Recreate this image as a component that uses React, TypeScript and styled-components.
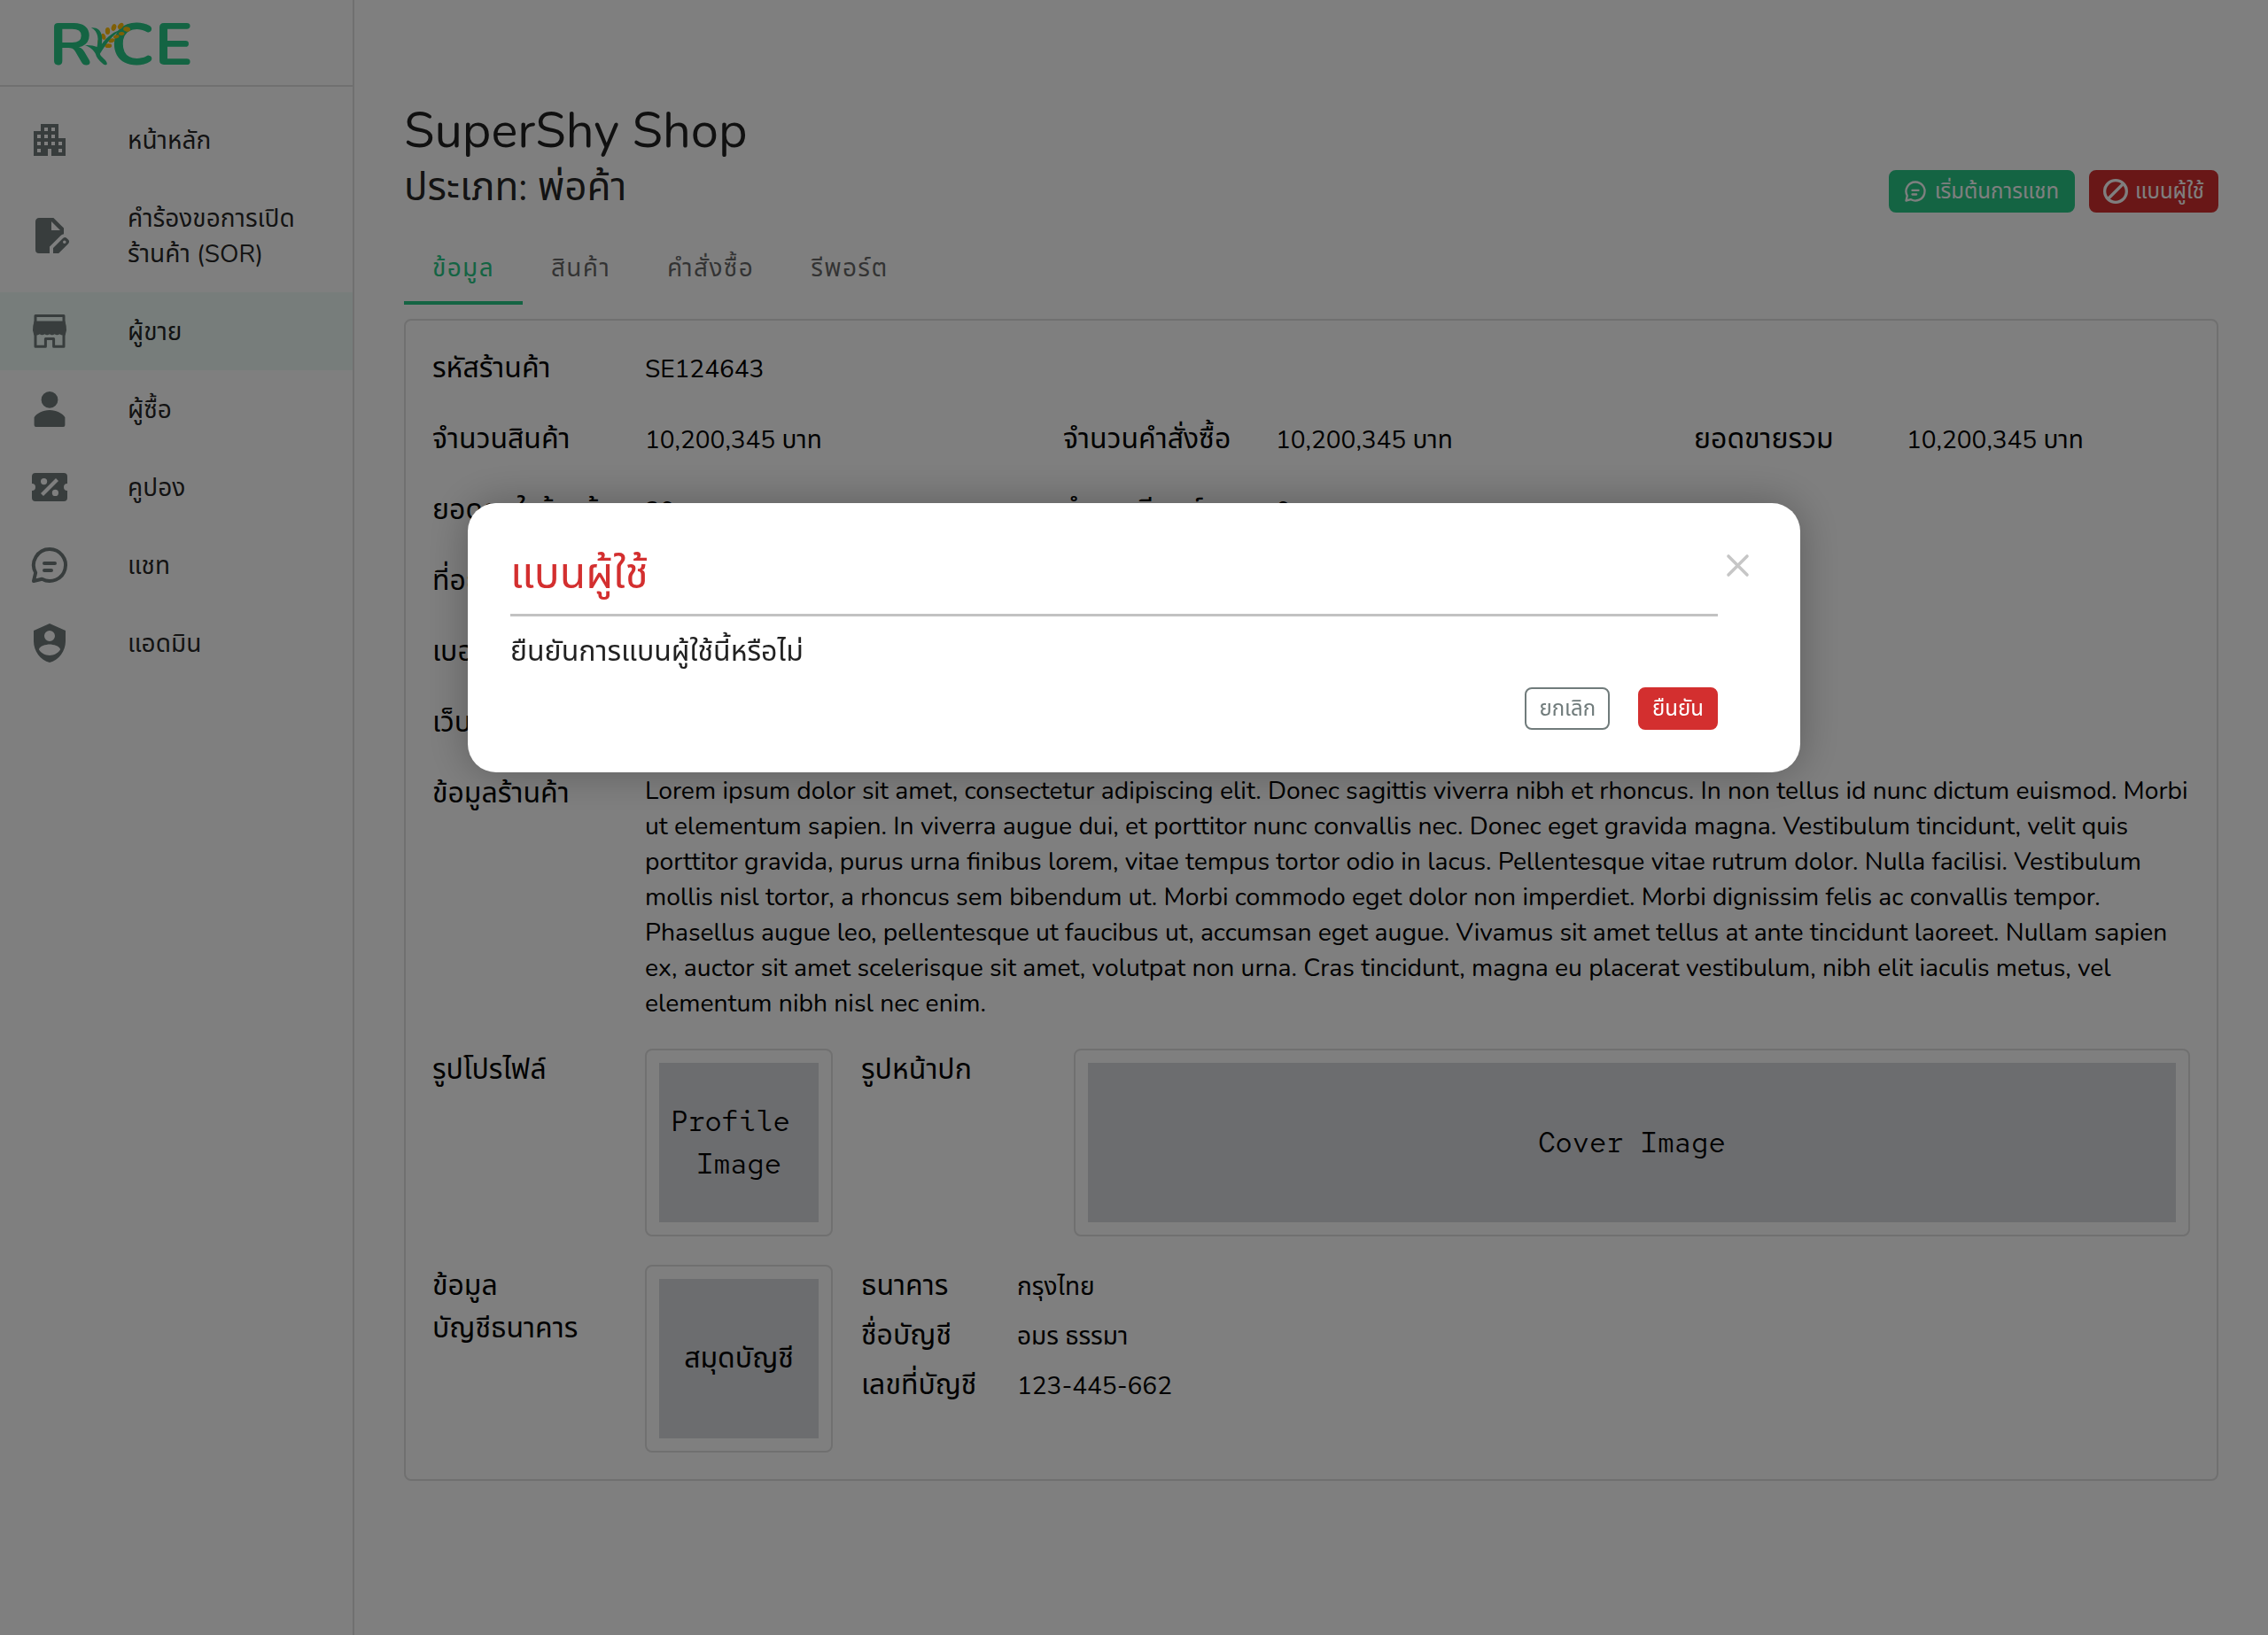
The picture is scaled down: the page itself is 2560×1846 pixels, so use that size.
import React from "react";
import styled, { createGlobalStyle, css } from "styled-components";

const GREEN = "#28c887";
const RED = "#d32f2f";
const SLATE = "#707b7b";
const LINE = "#e0e0e0";
const INK = "rgba(0, 0, 0, 0.87)";

const GlobalStyle = createGlobalStyle`
  *, *::before, *::after { box-sizing: border-box; }
  body {
    margin: 0;
    background: #fff;
    color: #000;
    font-family: Nunito, "Noto Sans Thai", "Noto Sans", sans-serif;
    font-size: 28px;
    line-height: 40px;
  }
  button { font: inherit; cursor: pointer; }
`;

const Page = styled.div`
  display: flex;
  height: 1846px;
  overflow: hidden;
`;

const Sidebar = styled.aside`
  flex: none;
  width: 400px;
  border-right: 2px solid ${LINE};
`;

const Brand = styled.div`
  display: flex;
  align-items: center;
  height: 98px;
  padding-left: 60px;
  border-bottom: 2px solid ${LINE};
`;

const LogoMark = styled.svg`
  width: 157px;
  height: 50px;
  overflow: visible;
`;

const NavList = styled.nav`
  display: flex;
  flex-direction: column;
  padding-top: 16px;
`;

const NavItem = styled.a<{ $active?: boolean }>`
  display: grid;
  grid-template-columns: 112px 1fr;
  align-items: center;
  padding: 24px 32px;
  color: ${INK};
  background: ${(p) => (p.$active ? "rgba(40, 200, 135, 0.08)" : "transparent")};
`;

const NavLabel = styled.span`
  margin: 1px 0 -1px;
  white-space: pre-line;
`;

const NavIcon = styled.svg`
  width: 48px;
  height: 48px;
  margin: -4px 0;
  color: ${SLATE};
`;

const Main = styled.main`
  flex: 1;
  padding: 112px 56px 0;
`;

const Header = styled.header`
  display: flex;
  justify-content: space-between;
  align-items: flex-end;
  color: ${INK};
`;

const Title = styled.h1`
  margin: 0;
  font-weight: 400;
  font-size: 56px;
  line-height: 72px;
`;

const Subtitle = styled.h2`
  margin: 0;
  font-weight: 400;
  font-size: 44px;
  line-height: 56px;
`;

const ButtonRow = styled.div<{ $gap: number }>`
  display: flex;
  justify-content: flex-end;
  gap: ${(p) => p.$gap}px;
`;

const Button = styled.button<{ $tone: "green" | "red" | "outline" }>`
  display: flex;
  align-items: center;
  gap: 8px;
  height: 48px;
  padding: 0 ${(p) => (p.$tone === "green" ? 16 : 14)}px 0 14px;
  border: 2px solid;
  border-radius: 8px;
  font-size: 24px;
  line-height: 44px;
  white-space: nowrap;
  svg { width: 28px; height: 28px; }
  ${(p) =>
    p.$tone === "outline"
      ? css`color: ${SLATE}; background: #fff; border-color: ${SLATE};`
      : css`
          color: #fff;
          background: ${p.$tone === "green" ? GREEN : RED};
          border-color: ${p.$tone === "green" ? GREEN : RED};
        `}
`;

const Tabs = styled.div`
  display: flex;
  margin: 8px 0 16px;
`;

const Tab = styled.div<{ $active?: boolean }>`
  height: 96px;
  padding: 35px 32px 0;
  letter-spacing: 1.35px;
  color: ${(p) => (p.$active ? GREEN : "rgba(0, 0, 0, 0.6)")};
  border-bottom: 4px solid ${(p) => (p.$active ? GREEN : "transparent")};
`;

const Card = styled.section`
  display: flex;
  flex-direction: column;
  gap: 32px;
  padding: 30px;
  border: 2px solid ${LINE};
  border-radius: 8px;
`;

const StatRow = styled.div`
  display: grid;
  grid-template-columns: 680px 680px 1fr;
  gap: 32px;
`;

const Field = styled.div<{ $top?: boolean }>`
  display: grid;
  grid-template-columns: 240px 1fr;
  align-items: ${(p) => (p.$top ? "start" : "center")};
`;

const Label = styled.div`
  font-size: 32px;
  line-height: 48px;
  white-space: pre-line;
`;

const Value = styled.div`
  margin: 1px 0 -1px;
`;

const Paragraph = styled(Value)`
  font-size: 28.27px;
`;

const MediaRow = styled.div`
  display: grid;
  grid-template-columns: 452px 1fr;
  gap: 32px;
`;

const Frame = styled.div`
  height: 212px;
  padding: 14px;
  border: 2px solid ${LINE};
  border-radius: 8px;
`;

const Placeholder = styled.div<{ $mono?: boolean }>`
  display: flex;
  align-items: center;
  justify-content: center;
  height: 100%;
  background: #d8dade;
  font-size: 32px;
  line-height: 48px;
  text-align: center;
  white-space: pre;
  ${(p) => p.$mono && css`
    font-family: "Red Hat Mono", "DejaVu Sans Mono", monospace;
  `}
`;

const BankList = styled.div`
  display: grid;
  grid-template-columns: 176px 1fr;
  align-content: start;
  align-items: center;
  row-gap: 8px;
`;

const Backdrop = styled.div`
  position: fixed;
  inset: 0;
  display: flex;
  justify-content: center;
  align-items: flex-start;
  padding-top: 568px;
  background: rgba(0, 0, 0, 0.5);
`;

const Dialog = styled.div`
  display: grid;
  grid-template-columns: 1363px 45px;
  align-items: start;
  padding: 48px;
  border-radius: 32px;
  background: #fff;
  box-shadow: 0 0 48px rgba(0, 0, 0, 0.28);
`;

const DialogTitle = styled.h3`
  margin: 0;
  padding-bottom: 13px;
  border-bottom: 3px solid #c2c2c2;
  font-weight: 400;
  font-size: 48px;
  line-height: 64px;
  color: ${RED};
`;

const DialogText = styled.p`
  margin: 16px 0;
  font-size: 32px;
  line-height: 48px;
  color: ${INK};
`;

const CloseIcon = styled.svg`
  width: 45px;
  height: 45px;
  color: #c6c6c6;
`;

const ChatGlyph = () => (
  <path
    d="M12 3a9 9 0 1 1-4.3 16.9L3 21l1.1-4.7A9 9 0 0 1 12 3zM9 11h6M9 15h4"
    fill="none" stroke="currentColor" strokeWidth="2" strokeLinecap="round" strokeLinejoin="round"
  />
);

const Logo = () => (
  <LogoMark viewBox="180 69 470 150">
    <g fill={GREEN} fontFamily="Nunito, sans-serif" fontWeight="700" fontSize="199" transform="scale(1.09 1)">
      <text x="152.5" y="219">R</text>
      <text x="343.5" y="219">C</text>
      <text x="480" y="219">E</text>
    </g>
    <g fill="#ffbe0b">
      <ellipse cx="364" cy="105" rx="8" ry="12" />
      <ellipse cx="385" cy="93" rx="8" ry="12" transform="rotate(20 385 93)" />
      <ellipse cx="408" cy="88" rx="8" ry="12" transform="rotate(40 408 88)" />
      <ellipse cx="350" cy="124" rx="7" ry="11" transform="rotate(-20 350 124)" />
      <ellipse cx="337" cy="143" rx="7" ry="11" />
      <ellipse cx="366" cy="155" rx="12" ry="7" />
      <ellipse cx="377" cy="137" rx="11" ry="7" transform="rotate(-15 377 137)" />
    </g>
    <path fill={GREEN} d="M308 94c20-2 32 8 36 26 2 10 1 20 0 29 18-26 44-44 72-51-30 14-54 44-78 84 2 12 24 20 24 34-1 6-9 4-15-1-13-11-22-22-24-33-6-12-20-24-36-29 16-1 30 1 41 6 6-24 6-52-20-65z" />
    <g fill="#ffbe0b">
      <ellipse cx="429" cy="99" rx="12" ry="8" transform="rotate(10 429 99)" />
      <ellipse cx="393" cy="124" rx="10" ry="6" transform="rotate(-15 393 124)" />
      <ellipse cx="411" cy="114" rx="10" ry="6" transform="rotate(-5 411 114)" />
    </g>
  </LogoMark>
);

const NAV = [
  { label: "หน้าหลัก", icon: <path fill="currentColor" d="M17 11V3H7v4H3v14h8v-4h2v4h8V11h-4zM7 19H5v-2h2v2zm0-4H5v-2h2v2zm0-4H5V9h2v2zm4 4H9v-2h2v2zm0-4H9V9h2v2zm0-4H9V5h2v2zm4 8h-2v-2h2v2zm0-4h-2V9h2v2zm0-4h-2V5h2v2zm4 12h-2v-2h2v2zm0-4h-2v-2h2v2z" /> },
  { label: "คำร้องขอการเปิด\nร้านค้า (SOR)", icon: <path fill="currentColor" fillRule="evenodd" d="M6 2h8.2L20 7.8v3.3c-.8.2-1.4.6-2 1.1l-6 6V22H6a2 2 0 0 1-2-2V4c0-1.1.9-2 2-2zm7 2v5h5zM14 19l5.4-5.4c.8-.8 1.6-.8 2.3-.1l.8.8c.7.7.7 1.5 0 2.3L17.1 22H14zM20.4 14.7a.9.9 0 1 0 0 1.8.9.9 0 0 0 0-1.8z" /> },
  { label: "ผู้ขาย", active: true, icon: <><path d="M4 3.3h16v17.3h-5.7v-4.4H9.7v4.4H4z" fill="none" stroke="currentColor" strokeWidth="1.5" strokeLinejoin="round" /><path fill="currentColor" d="M3.3 6.3h17.4q.8 2.5.8 5.2l-.7 2.7q-2 .3-3.2-.6-1.4 1-2.8 0-1.4 1-2.8 0-1.4 1-2.8 0-1.4 1-2.8 0-1.2.9-3.2.6l-.7-2.7q0-2.7.8-5.2z" /></> },
  { label: "ผู้ซื้อ", icon: <path fill="currentColor" d="M12 2a4.7 4.7 0 1 1 0 9.4A4.7 4.7 0 0 1 12 2zm0 10.5c4 0 7.3 1.9 8.7 4.1V21q0 1-1 1H4.3q-1 0-1-1v-4.4c1.4-2.2 4.7-4.1 8.7-4.1z" /> },
  { label: "คูปอง", icon: <path fill="currentColor" fillRule="evenodd" d="M4 4a2 2 0 0 0-2 2v4a2 2 0 0 1 0 4v4a2 2 0 0 0 2 2h16a2 2 0 0 0 2-2v-4a2 2 0 0 1 0-4V6a2 2 0 0 0-2-2H4zm11.5 3L17 8.5 8.5 17 7 15.5 15.5 7zm-6.7 0a1.8 1.8 0 1 1 0 3.6 1.8 1.8 0 0 1 0-3.6zm6.4 6.4a1.8 1.8 0 1 1 0 3.6 1.8 1.8 0 0 1 0-3.6z" /> },
  { label: "แชท", icon: <ChatGlyph /> },
  { label: "แอดมิน", icon: <path fill="currentColor" fillRule="evenodd" d="M12 1 3 5v6c0 5.55 3.84 10.74 9 12 5.16-1.26 9-6.45 9-12V5l-9-4zm0 4a3 3 0 1 1 0 6 3 3 0 0 1 0-6zm6 10.8c-1.3 2-3.5 3.2-6 3.2s-4.7-1.2-6-3.2c0-2 4-3 6-3s6 1 6 3z" /> },
];

const STATS: [string, string][][] = [
  [["รหัสร้านค้า", "SE124643"]],
  [["จำนวนสินค้า", "10,200,345 บาท"], ["จำนวนคำสั่งซื้อ", "10,200,345 บาท"], ["ยอดขายรวม", "10,200,345 บาท"]],
  [["ยอดถูกใจร้านค้า", "20"], ["จำนวนรีพอร์ต", "0"]],
  [["ที่อยู่", ""]],
  [["เบอร์โทรศัพท์", ""]],
  [["เว็บไซต์", ""]],
];

const ABOUT =
  "Lorem ipsum dolor sit amet, consectetur adipiscing elit. Donec sagittis viverra nibh et rhoncus. In non tellus id nunc dictum euismod. Morbi ut elementum sapien. In viverra augue dui, et porttitor nunc convallis nec. Donec eget gravida magna. Vestibulum tincidunt, velit quis porttitor gravida, purus urna finibus lorem, vitae tempus tortor odio in lacus. Pellentesque vitae rutrum dolor. Nulla facilisi. Vestibulum mollis nisl tortor, a rhoncus sem bibendum ut. Morbi commodo eget dolor non imperdiet. Morbi dignissim felis ac convallis tempor. Phasellus augue leo, pellentesque ut faucibus ut, accumsan eget augue. Vivamus sit amet tellus at ante tincidunt laoreet. Nullam sapien ex, auctor sit amet scelerisque sit amet, volutpat non urna. Cras tincidunt, magna eu placerat vestibulum, nibh elit iaculis metus, vel elementum nibh nisl nec enim.";

const BANK: [string, string][] = [
  ["ธนาคาร", "กรุงไทย"],
  ["ชื่อบัญชี", "อมร ธรรมา"],
  ["เลขที่บัญชี", "123-445-662"],
];

export default function App() {
  return (
    <>
      <GlobalStyle />
      <Page>
        <Sidebar>
          <Brand><Logo /></Brand>
          <NavList>
            {NAV.map((n) => (
              <NavItem key={n.label} $active={n.active}>
                <NavIcon viewBox="0 0 24 24">{n.icon}</NavIcon>
                <NavLabel>{n.label}</NavLabel>
              </NavItem>
            ))}
          </NavList>
        </Sidebar>
        <Main>
          <Header>
            <div>
              <Title>SuperShy Shop</Title>
              <Subtitle>ประเภท: พ่อค้า</Subtitle>
            </div>
            <ButtonRow $gap={16}>
              <Button $tone="green">
                <svg viewBox="0 0 24 24"><ChatGlyph /></svg>
                เริ่มต้นการแชท
              </Button>
              <Button $tone="red">
                <svg viewBox="0 0 28 28" fill="none" stroke="currentColor" strokeWidth="3.3">
                  <circle cx="14" cy="14" r="12.35" />
                  <path d="M5.5 22.5l17-17" />
                </svg>
                แบนผู้ใช้
              </Button>
            </ButtonRow>
          </Header>
          <Tabs>
            <Tab $active>ข้อมูล</Tab>
            <Tab>สินค้า</Tab>
            <Tab>คำสั่งซื้อ</Tab>
            <Tab>รีพอร์ต</Tab>
          </Tabs>
          <Card>
            {STATS.map((row) => (
              <StatRow key={row[0][0]}>
                {row.map(([label, value]) => (
                  <Field key={label}>
                    <Label>{label}</Label>
                    <Value>{value}</Value>
                  </Field>
                ))}
              </StatRow>
            ))}
            <Field $top>
              <Label>ข้อมูลร้านค้า</Label>
              <Paragraph>{ABOUT}</Paragraph>
            </Field>
            <MediaRow>
              <Field $top>
                <Label>รูปโปรไฟล์</Label>
                <Frame><Placeholder $mono>{"Profile \nImage"}</Placeholder></Frame>
              </Field>
              <Field $top>
                <Label>รูปหน้าปก</Label>
                <Frame><Placeholder $mono>Cover Image</Placeholder></Frame>
              </Field>
            </MediaRow>
            <MediaRow>
              <Field $top>
                <Label>{"ข้อมูล\nบัญชีธนาคาร"}</Label>
                <Frame><Placeholder>สมุดบัญชี</Placeholder></Frame>
              </Field>
              <BankList>
                {BANK.map(([label, value]) => (
                  <React.Fragment key={label}>
                    <Label>{label}</Label>
                    <Value>{value}</Value>
                  </React.Fragment>
                ))}
              </BankList>
            </MediaRow>
          </Card>
        </Main>
      </Page>
      <Backdrop>
        <Dialog role="dialog">
          <div>
            <DialogTitle>แบนผู้ใช้</DialogTitle>
            <DialogText>ยืนยันการแบนผู้ใช้นี้หรือไม่</DialogText>
            <ButtonRow $gap={32}>
              <Button $tone="outline">ยกเลิก</Button>
              <Button $tone="red">ยืนยัน</Button>
            </ButtonRow>
          </div>
          <CloseIcon viewBox="0 0 45 45">
            <path d="M12 12l21 21M33 12l-21 21" stroke="currentColor" strokeWidth="3.6" strokeLinecap="round" />
          </CloseIcon>
        </Dialog>
      </Backdrop>
    </>
  );
}
